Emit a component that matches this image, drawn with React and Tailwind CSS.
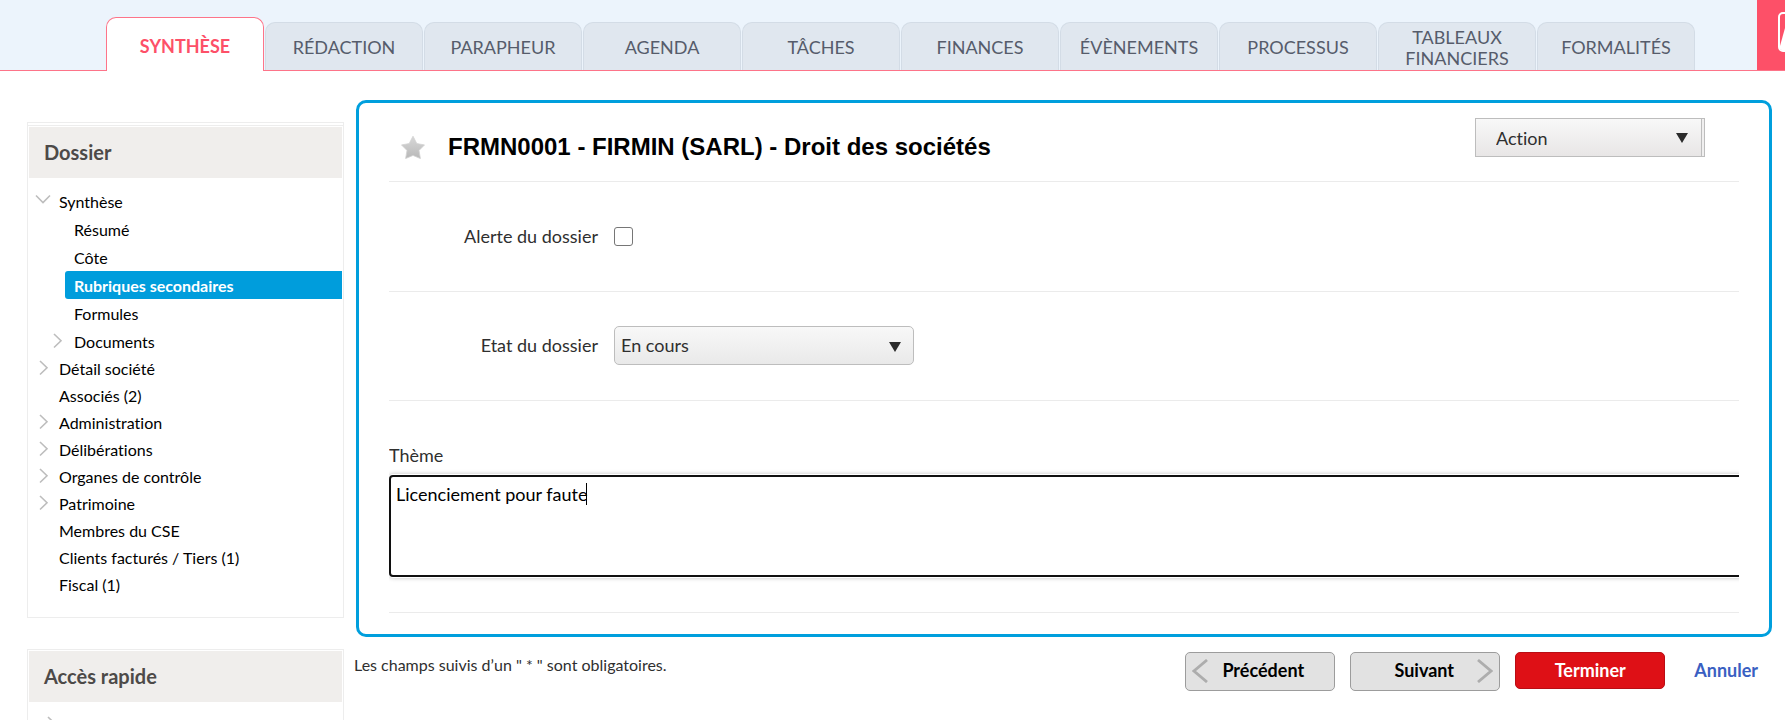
import React, { useState } from "react";

const TABS = [
  "Synthèse",
  "Rédaction",
  "Parapheur",
  "Agenda",
  "Tâches",
  "Finances",
  "Évènements",
  "Processus",
  "Tableaux financiers",
  "Formalités",
];

const MENU = [
  {
    label: "Synthèse",
    open: true,
    children: [
      { label: "Résumé" },
      { label: "Côte" },
      { label: "Rubriques secondaires" },
      { label: "Formules" },
      { label: "Documents", arrow: true },
    ],
  },
  { label: "Détail société", arrow: true },
  { label: "Associés (2)" },
  { label: "Administration", arrow: true },
  { label: "Délibérations", arrow: true },
  { label: "Organes de contrôle", arrow: true },
  { label: "Patrimoine", arrow: true },
  { label: "Membres du CSE" },
  { label: "Clients facturés / Tiers (1)" },
  { label: "Fiscal (1)" },
];

function Chevron({ down }) {
  return down ? (
    <svg className="w-4 h-4" viewBox="0 0 16 16" fill="none" stroke="#bdbdbd" strokeWidth="1.6">
      <path d="M1 2.5 8 9.5l7-7" />
    </svg>
  ) : (
    <svg className="w-4 h-4" viewBox="0 0 16 16" fill="none" stroke="#bdbdbd" strokeWidth="1.6">
      <path d="M5 1 12 7.7 5 14.5" />
    </svg>
  );
}

// Triangle drawn over the native selects
function Caret({ className }) {
  return (
    <svg
      className={`absolute pointer-events-none w-3 h-[10px] ${className}`}
      viewBox="0 0 12 10"
      fill="#2b2b2b"
    >
      <path d="M0 0h12L6 10z" />
    </svg>
  );
}

function Tab({ label, active, onClick }) {
  return (
    <button
      type="button"
      onClick={onClick}
      className={
        active
          ? "w-[158px] h-[54px] pt-0.5 bg-white border border-b-0 border-[#fd7489] rounded-t-[10px] text-lg font-bold uppercase text-[#fd5068] cursor-pointer"
          : "w-[158px] h-12 mb-px px-4 pt-0.5 bg-[#e0e7ef] border border-b-0 border-[#d3dce6] rounded-t-[10px] text-lg leading-[21px] uppercase text-[#565c6b] cursor-pointer"
      }
    >
      {label}
    </button>
  );
}

function MenuItem({ item, current, onSelect, sub }) {
  const selected = item.label === current;
  return (
    <li className={sub ? "flex h-7 pl-5" : "flex h-[27px] pl-1.5"}>
      <span className={sub ? "w-4 pt-1.5" : "w-6 pt-[5px]"}>
        {(item.arrow || item.open) && <Chevron down={item.open} />}
      </span>
      <a
        href="#"
        onClick={(e) => {
          e.preventDefault();
          onSelect(item.label);
        }}
        className={
          selected
            ? "flex-1 flex items-center pt-px pl-[9px] rounded-l-[3px] bg-[#009ddc] text-white font-bold"
            : sub
              ? "flex-1 flex items-center pt-px pl-[9px]"
              : "flex-1 flex items-center pt-px"
        }
      >
        {item.label}
      </a>
    </li>
  );
}

function SideBox({ title, children }) {
  return (
    <section className="border border-[#ededed] p-px">
      <h2 className="h-[51px] pl-[15px] pb-0.5 flex items-center bg-[#f0eeec] text-xl font-bold text-[#4d4a48]">
        {title}
      </h2>
      {children}
    </section>
  );
}

export default function App() {
  const [tab, setTab] = useState(TABS[0]);
  const [current, setCurrent] = useState("Rubriques secondaires");
  const [alerte, setAlerte] = useState(false);
  const [etat, setEtat] = useState("En cours");
  const [theme, setTheme] = useState("Licenciement pour faute");

  return (
    <div className="h-screen overflow-hidden bg-white font-['Lato',sans-serif] [font-variant-ligatures:none] text-[#2f2f2f]">
      {/* Top tabs */}
      <header className="flex justify-between h-[71px] bg-[#ecf4fc] shadow-[inset_0_-1px_0_#fd7489]">
        <nav className="flex items-end gap-px pl-[106px]">
          {TABS.map((t) => (
            <Tab key={t} label={t} active={t === tab} onClick={() => setTab(t)} />
          ))}
        </nav>
        <div className="w-7 h-[70px] pt-3 pl-[21px] overflow-hidden bg-[#fd5068]">
          <svg className="w-10 h-10" viewBox="0 0 40 40" fill="none" stroke="#fff" strokeWidth="2">
            <rect x="1" y="1" width="38" height="38" rx="4" />
            <path fill="#fff" stroke="none" d="M2 34 7 16h5v23H5L2 37z" />
          </svg>
        </div>
      </header>

      <div className="flex pl-[27px] pr-[13px]">
        {/* Sidebar */}
        <aside className="w-[317px] shrink-0 pt-[51px] text-base text-black">
          <div className="h-[3px] border border-b-0 border-[#ededed]"></div>
          <SideBox title="Dossier">
            <ul className="pt-[10px] pb-[18px]">
              {MENU.map((item) => (
                <React.Fragment key={item.label}>
                  <MenuItem item={item} current={current} onSelect={setCurrent} />
                  {item.children?.map((child) => (
                    <MenuItem
                      key={child.label}
                      item={child}
                      current={current}
                      onSelect={setCurrent}
                      sub
                    />
                  ))}
                </React.Fragment>
              ))}
            </ul>
          </SideBox>

          <div className="mt-[31px]">
            <SideBox title="Accès rapide">
              <div className="pt-3.5 pl-[14px]">
                <Chevron />
              </div>
            </SideBox>
          </div>
        </aside>

        {/* Main form */}
        <main className="flex-1 min-w-0 pt-[29px] pl-[10px]">
          <form onSubmit={(e) => e.preventDefault()}>
            <div className="ml-0.5 px-[30px] pb-[21px] border-3 border-[#009fdd] rounded-[10px] text-lg">
              <div className="flex items-start justify-between h-[79px] pt-[15px] pr-[34px] border-b border-[#ebebeb]">
                <div className="flex items-center gap-[23px] pt-[17px] pl-3">
                  <svg className="w-6 h-6" viewBox="0 0 24 24">
                    <defs>
                      <linearGradient id="star" x1="0" y1="0" x2="0" y2="1">
                        <stop offset="0" stopColor="#d8d8d8" />
                        <stop offset="1" stopColor="#b8b8b8" />
                      </linearGradient>
                    </defs>
                    <path
                      fill="url(#star)"
                      stroke="#d2d2d2"
                      strokeWidth="0.8"
                      strokeLinejoin="round"
                      d="M12 1.2 15.8 8.6 23.5 9.9 18 15.4l1.4 8.2L12 20.4l-7.4 3.2L6 15.4 0.5 9.9 8.2 8.6z"
                    />
                  </svg>
                  <h1 className="font-['Liberation_Sans',Arial,sans-serif] text-2xl leading-6 font-bold text-black">
                    FRMN0001 - FIRMIN (SARL) - Droit des sociétés
                  </h1>
                </div>
                <div className="relative w-[230px] border border-[#bdbdbd] bg-[#f0efef] pr-0.5">
                  <select
                    aria-label="Action"
                    className="appearance-none block w-full h-[37px] pl-5 border-r border-[#bdbdbd] bg-linear-to-b from-[#f8f8f8] to-[#e8e6e6] outline-none"
                  >
                    <option>Action</option>
                  </select>
                  <Caret className="right-4 top-[14px]" />
                </div>
              </div>

              <div className="flex items-center gap-4 h-[110px] pb-px border-b border-[#ebebeb]">
                <label htmlFor="alerte" className="w-[209px] text-right">
                  Alerte du dossier
                </label>
                <input
                  id="alerte"
                  type="checkbox"
                  checked={alerte}
                  onChange={(e) => setAlerte(e.target.checked)}
                  className="appearance-none w-[19px] h-[19px] border border-[#767676] rounded-[3px] bg-white checked:bg-[#009fdd]"
                />
              </div>

              <div className="flex items-center gap-4 h-[109px] pb-0.5 border-b border-[#ebebeb]">
                <label htmlFor="etat" className="w-[209px] text-right">
                  Etat du dossier
                </label>
                <div className="relative w-[300px]">
                  <select
                    id="etat"
                    value={etat}
                    onChange={(e) => setEtat(e.target.value)}
                    className="appearance-none block w-full h-[39px] pl-[6px] border border-[#bdbdbd] rounded-[5px] bg-linear-to-b from-[#f8f8f8] to-[#e9e9e9] outline-none"
                  >
                    <option>En cours</option>
                    <option>Terminé</option>
                  </select>
                  <Caret className="right-[13px] top-4" />
                </div>
              </div>

              <div className="pt-10 pb-[35px] border-b border-[#ebebeb] overflow-hidden">
                <label htmlFor="theme" className="block leading-7">
                  Thème
                </label>
                {/* the field runs past the right edge and gets cut there */}
                <div className="relative -mr-3 mt-1.5">
                  <textarea
                    id="theme"
                    value={theme}
                    onChange={(e) => setTheme(e.target.value)}
                    className="block w-full h-[102px] px-[5px] pt-[3px] resize-none border-2 border-[#101010] rounded-[4px] leading-7 text-black caret-transparent outline-none shadow-[0_0_0_1px_#fff,0_0_4px_1px_rgba(0,0,0,0.25)]"
                  />
                  <span className="absolute left-[197px] top-2 w-px h-[22px] bg-black"></span>
                </div>
              </div>
            </div>

            {/* Footer buttons */}
            <div className="flex items-start justify-between pt-[15px] pr-[14px]">
              <p className="pt-px text-base leading-6">
                Les champs suivis d’un " * " sont obligatoires.
              </p>
              <div className="flex items-start gap-[15px] text-lg font-bold">
                <button
                  type="button"
                  className="relative w-[150px] h-[39px] pl-1.5 pb-[3px] bg-[#e2e2e2] border border-[#9c9c9c] rounded-[5px] text-black cursor-pointer"
                >
                  <svg className="absolute left-[6px] top-[6px] w-4 h-6" viewBox="0 0 16 24" fill="none" stroke="#adadad" strokeWidth="2.8">
                    <path d="M15 1 2 12l13 11" />
                  </svg>
                  Précédent
                </button>
                <button
                  type="button"
                  className="relative w-[150px] h-[39px] pr-0.5 pb-[3px] bg-[#e2e2e2] border border-[#9c9c9c] rounded-[5px] text-black cursor-pointer"
                >
                  Suivant
                  <svg className="absolute right-[6px] top-[6px] w-4 h-6" viewBox="0 0 16 24" fill="none" stroke="#adadad" strokeWidth="2.8">
                    <path d="M1 1 14 12 1 23" />
                  </svg>
                </button>
                <button
                  type="submit"
                  className="w-[150px] h-[37px] pb-px bg-[#de1016] border border-[#b90d14] rounded-[5px] text-white cursor-pointer"
                >
                  Terminer
                </button>
                <a href="#" className="pl-[14px] leading-[37px] text-[#3a5fc2]">
                  Annuler
                </a>
              </div>
            </div>
          </form>
        </main>
      </div>
    </div>
  );
}
